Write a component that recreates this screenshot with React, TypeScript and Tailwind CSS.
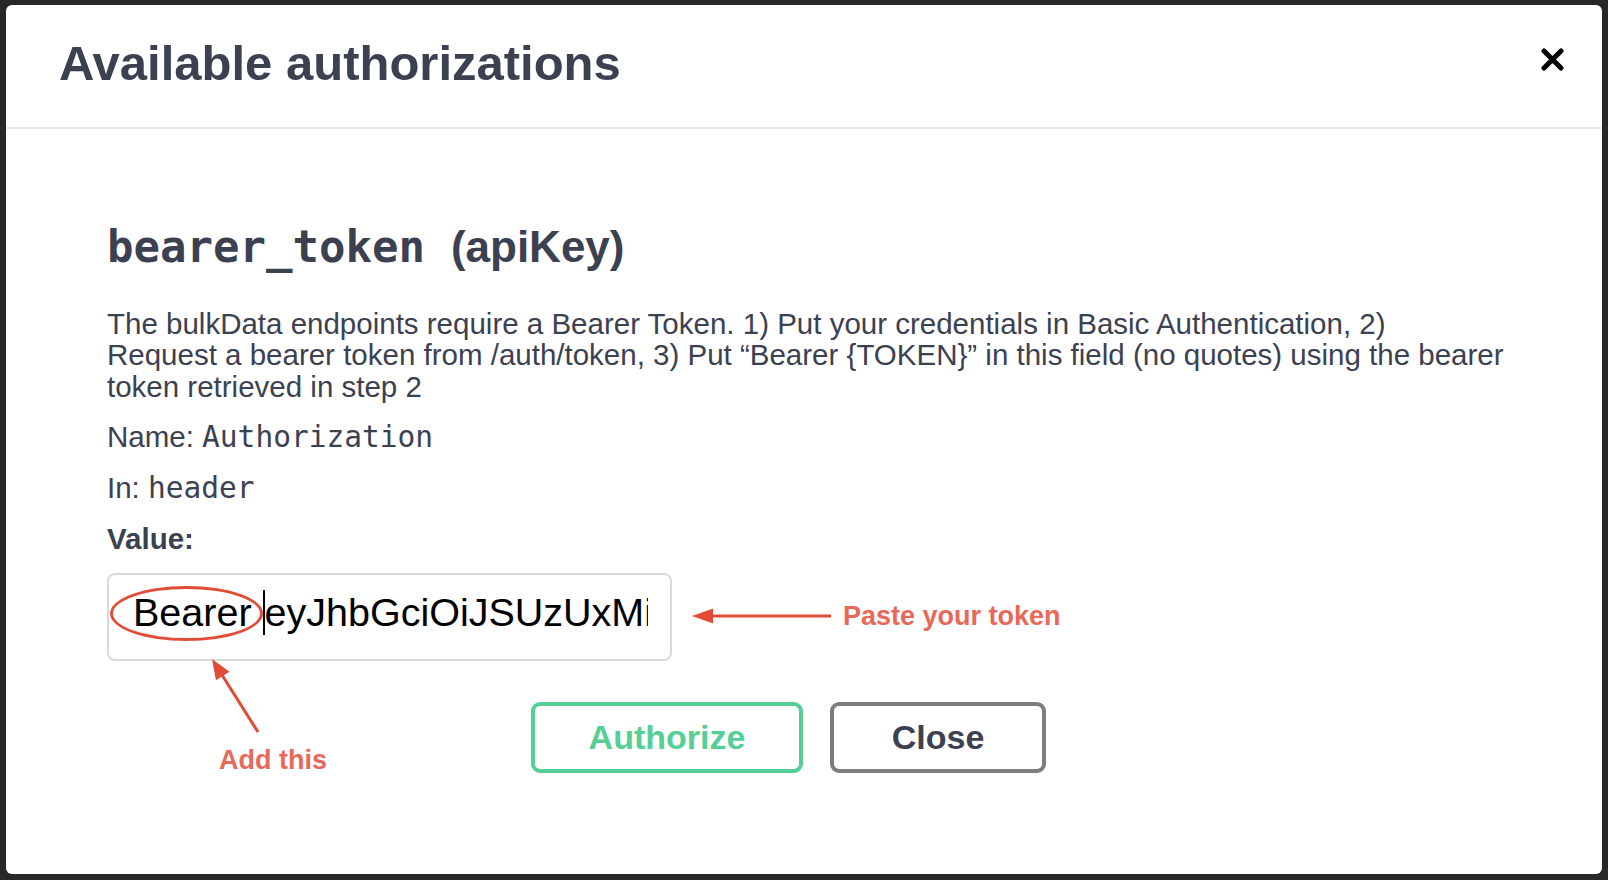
import React from "react";

const sans = "font-['Liberation_Sans',Arial,sans-serif]";
const mono = "font-['DejaVu_Sans_Mono',monospace]";

const AuthModal = () => {
  return (
    <div className="w-[1608px] h-[880px] bg-[#282828] pt-[5px] pl-[6px]">
      <div className={`relative w-[1596px] h-[869px] bg-white rounded-[6px] flex flex-col ${sans} text-[#3b4151]`}>
        {/* header */}
        <div className="h-[124px] flex justify-between items-start pl-[53px] pr-[38px] pt-[33px] border-b-2 border-[#ebebeb]">
          <h2 className="text-[49px] leading-[50px] font-bold">Available authorizations</h2>
          <svg className="mt-[10px]" width="23" height="23" viewBox="0 0 23 23">
            <path d="M3 3 L20 20 M20 3 L3 20" stroke="#000" strokeWidth="5" strokeLinecap="round" />
          </svg>
        </div>

        {/* body */}
        <div className="flex flex-col pl-[101px] pt-[92px]">
          <h4 className="text-[44px] leading-[52px] font-bold whitespace-nowrap">
            <span className={`${mono} font-semibold`}>bearer_token</span>
            <span className="ml-[26px]">(apiKey)</span>
          </h4>

          <p className="mt-[35px] text-[29.5px] leading-[31.3px]">
            The bulkData endpoints require a Bearer Token. 1) Put your credentials in Basic Authentication, 2)
            <br />
            Request a bearer token from /auth/token, 3) Put “Bearer {"{TOKEN}"}” in this field (no quotes) using the bearer
            <br />
            token retrieved in step 2
          </p>

          <p className="mt-[19px] text-[29.5px] leading-[31.3px]">
            Name: <span className={`${mono} text-[29.5px]`}>Authorization</span>
          </p>
          <p className="mt-[19px] text-[29.5px] leading-[31.3px]">
            In: <span className={`${mono} text-[29.5px]`}>header</span>
          </p>
          <p className="mt-[19px] text-[29.5px] leading-[31.3px] font-bold">Value:</p>

          {/* token field */}
          <div className="relative mt-[18px] w-[565px] h-[88px] border-2 border-[#d9d9d9] rounded-[8px] flex items-center pl-[24px] pb-[8px]">
            <div className="w-[515px] overflow-hidden whitespace-nowrap text-[39.5px] leading-none text-black">
              Bearer <span className="inline-block w-[2px] h-[45px] bg-black align-[-9px]" />eyJhbGciOiJSUzUxMiIsInR5cCI6IkpXVCJ9
            </div>
            <div className="absolute left-[1px] top-[11px] w-[153px] h-[55px] rounded-[50%] border-[3px] border-[#e24c37]" />
          </div>

          {/* buttons */}
          <div className="mt-[41px] flex gap-[27px] pl-[424px]">
            <button className="w-[272px] h-[71px] border-4 border-[#55cf95] rounded-[9px] text-[34px] font-bold text-[#55cf95]">
              Authorize
            </button>
            <button className="w-[216px] h-[71px] border-4 border-[#7d7d7d] rounded-[9px] text-[34px] font-bold text-[#3b4151]">
              Close
            </button>
          </div>
        </div>

        {/* annotations */}
        <svg className="absolute left-[680px] top-[599px]" width="160" height="24" viewBox="0 0 160 24">
          <line x1="24" y1="12" x2="145" y2="12" stroke="#e24c37" strokeWidth="3" />
          <polygon points="6,12 27,4.5 27,19.5" fill="#e24c37" />
        </svg>
        <span className="absolute left-[837px] top-[598px] text-[27px] leading-[27px] font-bold text-[#e8695a] whitespace-nowrap">
          Paste your token
        </span>

        <svg className="absolute left-[190px] top-[641px]" width="80" height="100" viewBox="0 0 80 100">
          <line x1="62" y1="86" x2="26" y2="29" stroke="#e24c37" strokeWidth="3" />
          <polygon points="16,13 33.4,25.7 19.9,34.2" fill="#e24c37" />
        </svg>
        <span className="absolute left-[213px] top-[742px] text-[27px] leading-[27px] font-bold text-[#e8695a] whitespace-nowrap">
          Add this
        </span>
      </div>
    </div>
  );
};

export default function App() {
  return <AuthModal />;
}
